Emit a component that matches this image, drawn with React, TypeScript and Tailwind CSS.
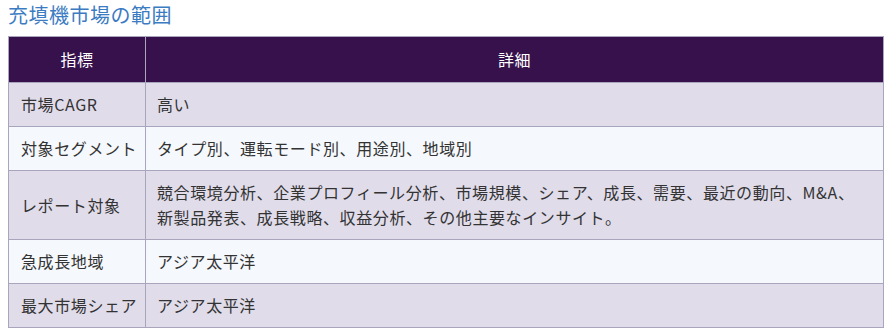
const rows: { label: string; detail: string }[] = [
  { label: "市場CAGR", detail: "高い" },
  { label: "対象セグメント", detail: "タイプ別、運転モード別、用途別、地域別" },
  {
    label: "レポート対象",
    detail:
      "競合環境分析、企業プロフィール分析、市場規模、シェア、成長、需要、最近の動向、M&A、新製品発表、成長戦略、収益分析、その他主要なインサイト。",
  },
  { label: "急成長地域", detail: "アジア太平洋" },
  { label: "最大市場シェア", detail: "アジア太平洋" },
];

export default function App() {
  return (
    <div className="w-[892px] h-[336px] bg-white px-2 font-['Noto_Sans_CJK_JP','Noto_Sans',sans-serif]">
      <h2 className="text-[20px] leading-[30px] tracking-[0.5px] text-[#3b7bc2] h-[36px]">
        充填機市場の範囲
      </h2>
      <table className="w-[876px] table-fixed border-collapse text-[16px] leading-[25px] tracking-[0.6px] text-[#333333]">
        <colgroup>
          <col className="w-[137px]" />
          <col />
        </colgroup>
        <thead>
          <tr className="bg-[#37114b] text-white h-[46px]">
            <th className="border border-[#a9a5bd] font-normal text-center">指標</th>
            <th className="border border-[#a9a5bd] font-normal text-center">詳細</th>
          </tr>
        </thead>
        <tbody>
          {rows.map((r, i) => (
            <tr key={r.label} className={i % 2 === 0 ? "bg-[#e0dcea]" : "bg-[#f5f8fc]"}>
              <td className="border border-[#a9a5bd] pl-3 pr-1 py-[9px] align-middle whitespace-nowrap">
                {r.label}
              </td>
              <td className="border border-[#a9a5bd] pl-[11px] pr-5 py-[9px] align-middle">
                {r.detail}
              </td>
            </tr>
          ))}
        </tbody>
      </table>
    </div>
  );
}
